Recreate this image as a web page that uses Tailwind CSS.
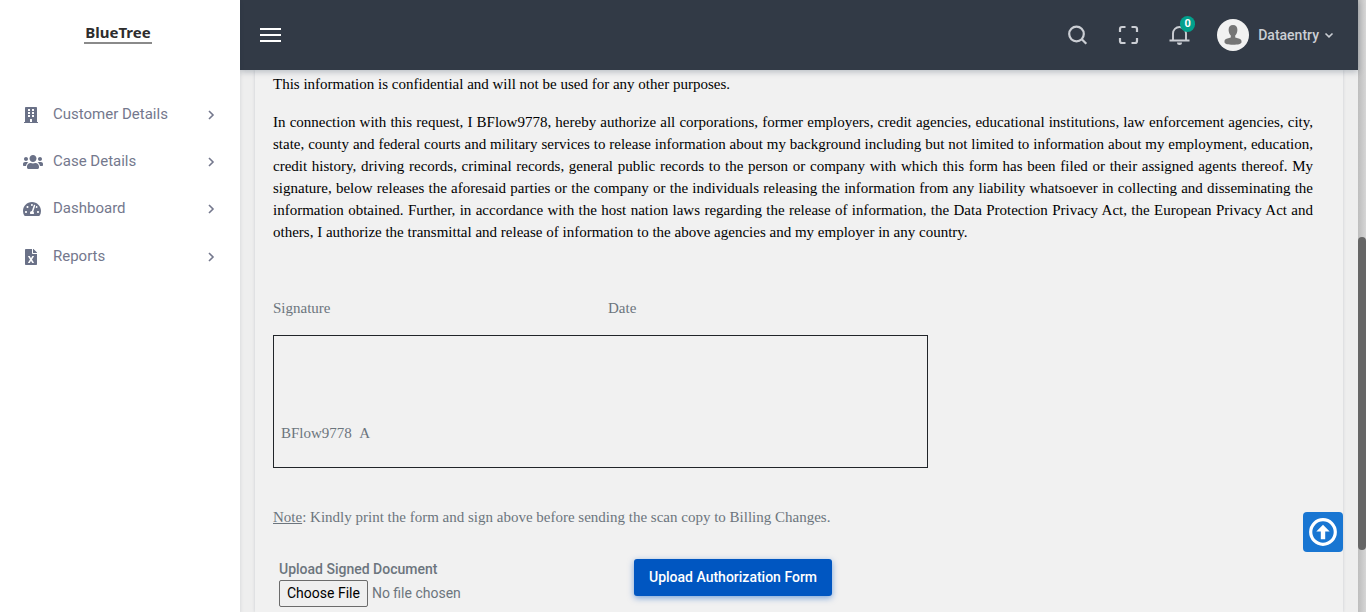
<!DOCTYPE html>
<html lang="en">
<head>
<meta charset="utf-8">
<meta name="viewport" content="width=device-width, initial-scale=1">
<title>BlueTree</title>
<script src="https://cdn.jsdelivr.net/npm/@tailwindcss/browser@4"></script>
</head>
<body class="flex h-screen overflow-hidden bg-[#eeeeee] font-['Roboto',sans-serif] text-sm text-[#74788d]">

<!-- Sidebar -->
<aside class="z-20 flex w-60 shrink-0 flex-col bg-white shadow-[0_2px_4px_rgba(15,34,58,0.12)]">
  <div class="flex h-[70px] items-center justify-center pr-1 pb-1">
    <a href="#" class="border-b-2 border-[#8a8a8a] px-px font-['Noto_Sans','Open_Sans',sans-serif] text-[15px] leading-5 font-bold text-[#2d2d2d]">BlueTree</a>
  </div>
  <nav class="mt-[21px]">
    <ul class="text-[15px] text-[#74788d]">
      <li><a href="#" class="flex h-[47px] items-center pr-6 pl-[21px]">
        <span class="mr-3 flex w-5 justify-center text-[#6a7187]"><svg class="h-4 w-[14px]" viewBox="0 0 448 512" fill="currentColor" fill-rule="evenodd"><path d="M436 480h-20V24c0-13.3-10.7-24-24-24H56C42.700 0 32 10.700 32 24v456H12c-6.600 0-12 5.400-12 12v20h448v-20c0-6.600-5.400-12-12-12zM128 76c0-6.600 5.400-12 12-12h40c6.600 0 12 5.400 12 12v40c0 6.600-5.400 12-12 12h-40c-6.600 0-12-5.400-12-12V76zm0 96c0-6.600 5.400-12 12-12h40c6.600 0 12 5.400 12 12v40c0 6.600-5.400 12-12 12h-40c-6.600 0-12-5.400-12-12v-40zm52 148h-40c-6.600 0-12-5.400-12-12v-40c0-6.600 5.400-12 12-12h40c6.600 0 12 5.400 12 12v40c0 6.600-5.400 12-12 12zm76 160h-64v-84c0-6.600 5.400-12 12-12h40c6.600 0 12 5.400 12 12v84zm64-172c0 6.600-5.400 12-12 12h-40c-6.600 0-12-5.400-12-12v-40c0-6.600 5.400-12 12-12h40c6.600 0 12 5.400 12 12v40zm0-96c0 6.600-5.400 12-12 12h-40c-6.600 0-12-5.400-12-12v-40c0-6.600 5.400-12 12-12h40c6.600 0 12 5.400 12 12v40zm0-96c0 6.600-5.400 12-12 12h-40c-6.600 0-12-5.400-12-12V76c0-6.600 5.400-12 12-12h40c6.600 0 12 5.400 12 12v40z"/></svg></span>
        <span class="flex-1">Customer Details</span>
        <svg class="h-[10px] w-[10px]" viewBox="0 0 10 10" fill="none" stroke="currentColor" stroke-width="1.6"><path d="M3 1l4 4-4 4"/></svg>
      </a></li>
      <li><a href="#" class="flex h-[47px] items-center pr-6 pl-[23px]">
        <span class="mr-[10px] flex w-5 justify-center text-[#6a7187]"><svg class="h-4 w-5" viewBox="0 0 640 512" fill="currentColor"><path d="M96 224c35.300 0 64-28.700 64-64s-28.700-64-64-64-64 28.700-64 64 28.700 64 64 64zm448 0c35.300 0 64-28.700 64-64s-28.700-64-64-64-64 28.700-64 64 28.700 64 64 64zm32 32h-64c-17.600 0-33.500 7.100-45.100 18.600 40.300 22.100 68.900 62 75.100 109.400h66c17.700 0 32-14.300 32-32v-32c0-35.300-28.700-64-64-64zm-256 0c61.900 0 112-50.100 112-112S381.900 32 320 32 208 82.100 208 144s50.100 112 112 112zm76.800 32h-8.300c-20.800 10-43.900 16-68.500 16s-47.600-6-68.500-16h-8.300C179.600 288 128 339.600 128 403.200V432c0 26.500 21.500 48 48 48h288c26.500 0 48-21.500 48-48v-28.800c0-63.600-51.600-115.200-115.200-115.200zm-223.700-13.400C161.500 263.100 145.600 256 128 256H64c-35.300 0-64 28.700-64 64v32c0 17.700 14.300 32 32 32h65.900c6.300-47.400 34.900-87.300 75.200-109.400z"/></svg></span>
        <span class="flex-1">Case Details</span>
        <svg class="h-[10px] w-[10px]" viewBox="0 0 10 10" fill="none" stroke="currentColor" stroke-width="1.6"><path d="M3 1l4 4-4 4"/></svg>
      </a></li>
      <li><a href="#" class="flex h-12 items-center pr-6 pl-[23px]">
        <span class="mr-3 flex w-[18px] justify-center text-[#6a7187]"><svg class="h-4 w-[18px]" viewBox="0 0 576 512" fill="currentColor"><path d="M288 32C128.940 32 0 160.940 0 320c0 52.800 14.250 102.260 39.060 144.800 5.610 9.620 16.300 15.200 27.440 15.200h443c11.140 0 21.830-5.580 27.440-15.200C561.750 422.260 576 372.800 576 320c0-159.060-128.940-288-288-288zm0 64c14.710 0 26.580 10.130 30.320 23.650-1.110 2.260-2.640 4.230-3.450 6.670l-9.220 27.670c-5.130 3.490-10.970 6.010-17.640 6.010-17.670 0-32-14.330-32-32S270.330 96 288 96zM96 384c-17.670 0-32-14.330-32-32s14.330-32 32-32 32 14.330 32 32-14.330 32-32 32zm48-160c-17.670 0-32-14.330-32-32s14.330-32 32-32 32 14.330 32 32-14.330 32-32 32zm246.770-72.410l-61.330 184C343.130 347.330 352 364.540 352 384c0 11.720-3.380 22.550-8.880 32H232.880c-5.500-9.450-8.880-20.280-8.880-32 0-33.940 26.500-61.430 59.900-63.590l61.340-184.010c4.170-12.560 17.730-19.450 30.360-15.170 12.570 4.190 19.350 17.790 15.170 30.360zm14.660 57.200l15.520-46.550c3.470-1.290 7.130-2.230 11.050-2.230 17.670 0 32 14.330 32 32s-14.330 32-32 32c-11.380-.01-20.890-6.280-26.570-15.220zM480 384c-17.670 0-32-14.330-32-32s14.330-32 32-32 32 14.330 32 32-14.330 32-32 32z"/></svg></span>
        <span class="flex-1">Dashboard</span>
        <svg class="h-[10px] w-[10px]" viewBox="0 0 10 10" fill="none" stroke="currentColor" stroke-width="1.6"><path d="M3 1l4 4-4 4"/></svg>
      </a></li>
      <li><a href="#" class="flex h-[47px] items-center pr-6 pl-[21px]">
        <span class="mr-3 flex w-5 justify-center text-[#6a7187]"><svg class="h-4 w-3" viewBox="0 0 384 512" fill="currentColor"><path d="M224 136V0H24C10.700 0 0 10.700 0 24v464c0 13.300 10.700 24 24 24h336c13.300 0 24-10.700 24-24V160H248c-13.200 0-24-10.800-24-24zm60.100 106.500L224 336l60.100 93.500c5.100 8-.6 18.500-10.100 18.500h-34.900c-4.400 0-8.500-2.400-10.600-6.300C208.900 405.500 192 373 192 373c-6.400 14.800-10 20-36.600 68.800-2.100 3.900-6.100 6.300-10.500 6.300H110c-9.500 0-15.200-10.500-10.100-18.500l60.300-93.500-60.300-93.500c-5.200-8 .6-18.500 10.100-18.500h34.800c4.400 0 8.500 2.400 10.600 6.300 26.100 48.800 20 33.600 36.600 68.500 0 0 6.100-11.700 36.600-68.500 2.100-3.900 6.200-6.300 10.600-6.300H274c9.500-.1 15.200 10.400 10.100 18.400zM384 121.900v6.100H256V0h6.100c6.400 0 12.500 2.500 17 7l97.900 98c4.500 4.500 7 10.600 7 16.900z"/></svg></span>
        <span class="flex-1">Reports</span>
        <svg class="h-[10px] w-[10px]" viewBox="0 0 10 10" fill="none" stroke="currentColor" stroke-width="1.6"><path d="M3 1l4 4-4 4"/></svg>
      </a></li>
    </ul>
  </nav>
</aside>

<div class="flex min-w-0 flex-1 flex-col">
  <!-- Top bar -->
  <header class="z-10 flex h-[70px] shrink-0 items-center bg-[#323a46] pr-6 pl-[19px] text-[#cbced4] shadow-[0_2px_6px_rgba(15,34,58,0.25)]">
    <button type="button" aria-label="Toggle menu" class="text-white"><svg class="h-[22px] w-[22px]" viewBox="0 0 22 22" stroke="currentColor" stroke-width="2"><path d="M1 5h21M1 11h21M1 17h21"/></svg></button>
    <div class="ml-auto flex items-center">
      <button type="button" aria-label="Search" class="mr-[29px]"><svg class="h-[22px] w-[22px]" viewBox="0 0 22 22" fill="none" stroke="currentColor" stroke-width="2.200"><circle cx="9.500" cy="10" r="7.300"/><path d="M14.800 15.300l4.500 4.500"/></svg></button>
      <button type="button" aria-label="Full screen" class="mr-[29px]"><svg class="h-[22px] w-[22px]" viewBox="0 0 22 22" fill="none" stroke="currentColor" stroke-width="2.200"><path d="M2 8V5Q2 3 4 3H7.500M13.500 3h3.500q2 0 2 2v3M19 14v3q0 2-2 2H13.500M7.500 19H4q-2 0-2-2v-3"/></svg></button>
      <button type="button" aria-label="Notifications" class="relative mr-[26px]"><svg class="h-[22px] w-[22px]" viewBox="0 0 22 22" fill="none" stroke="currentColor" stroke-width="1.900"><path d="M.5 16.500h20M4 16V9.500a6.500 6.500 0 0 1 13 0V16"/><path d="M8 18.500h5a2.500 2.500 0 0 1-5 0z" fill="currentColor" stroke="none"/></svg>
        <span class="absolute -top-2 left-[11px] flex h-4 w-[15px] items-center justify-center rounded-full bg-[#02a08c] text-[11px] leading-4 font-bold text-white">0</span>
      </button>
      <button type="button" class="flex items-center text-sm font-medium">
        <svg class="mr-[9px] h-8 w-8" viewBox="0 0 32 32"><circle cx="16" cy="16" r="16" fill="#f1f1f1"/><path d="M16 6c2.800 0 4.400 1.900 4.400 4.800 0 2.500-1 4.700-2.200 5.700v2l4.300 1.300c1.300.4 2 1.400 2 2.700v.8c0 1.700-3.500 2.500-8.500 2.500s-8.500-.8-8.500-2.500v-.8c0-1.300.7-2.300 2-2.700l4.300-1.300v-2c-1.200-1-2.200-3.200-2.200-5.700C11.600 7.900 13.200 6 16 6z" fill="#757575"/></svg>
        <span>Dataentry</span>
        <svg class="ml-[5px] h-[10px] w-[10px]" viewBox="0 0 10 10" fill="none" stroke="currentColor" stroke-width="1.6"><path d="M1.500 3.500L5 6.800l3.500-3.300"/></svg>
      </button>
    </div>
  </header>

  <!-- Authorization form -->
  <main class="min-h-0 flex-1 overflow-hidden pr-[15px] pl-[15px]">
    <form class="h-full bg-[#f1f1f1] pt-[3px] pr-[30px] pl-[18px] text-[#6c757d] shadow-[0_0_3px_rgba(15,34,58,0.15)]">
      <div class="font-['Liberation_Serif',serif] text-[15px] leading-[22px]">
        <p class="mb-4 text-black">This information is confidential and will not be used for any other purposes.</p>
        <p class="text-justify text-black">In connection with this request, I BFlow9778, hereby authorize all corporations, former employers, credit agencies, educational institutions, law enforcement agencies, city, state, county and federal courts and military services to release information about my background including but not limited to information about my employment, education, credit history, driving records, criminal records, general public records to the person or company with which this form has been filed or their assigned agents thereof. My signature, below releases the aforesaid parties or the company or the individuals releasing the information from any liability whatsoever in collecting and disseminating the information obtained. Further, in accordance with the host nation laws regarding the release of information, the Data Protection Privacy Act, the European Privacy Act and others, I authorize the transmittal and release of information to the above agencies and my employer in any country.</p>
        <div class="mt-[54px] flex">
          <p class="w-[335px]">Signature</p>
          <p>Date</p>
        </div>
        <div class="mt-4 flex h-[133px] w-[655px] max-w-full items-end border border-[#212529] px-[7px] pb-[23px]">
          <p>BFlow9778 &nbsp;A</p>
        </div>
        <p class="mt-[38px]"><u>Note</u>: Kindly print the form and sign above before sending the scan copy to Billing Changes.</p>
      </div>
      <div class="mt-[31px] flex items-start pl-[6px]">
        <div class="w-[355px]">
          <label for="signed-document" class="block h-[21px] leading-[21px] font-medium">Upload Signed Document</label>
          <input id="signed-document" type="file" class="block w-full text-sm file:mr-1 file:h-[27px] file:rounded-[2px] file:border file:border-solid file:border-[#6b6b6b] file:bg-[#efefef] file:px-[7px] file:pb-[2px] file:text-sm file:font-normal file:text-black">
        </div>
        <button type="button" class="h-[37px] rounded-[3px] bg-[#0056c1] px-[15px] pb-[2px] text-sm font-medium text-white shadow-[0_2px_6px_rgba(0,86,193,0.5)]">Upload Authorization Form</button>
      </div>
    </form>
  </main>
</div>

<!-- Page scroll track -->
<div class="flex w-2 shrink-0 flex-col bg-linear-to-r from-[#bdbdbd] to-[#d6d6d6]">
  <div class="mt-[237px] h-[313px] rounded-full bg-[#666666]"></div>
</div>

<!-- Back to top -->
<a href="#" aria-label="Back to top" class="fixed right-[23px] bottom-[60px] z-30 flex h-10 w-10 items-center justify-center rounded-[4px] bg-[#1976d2] text-white">
  <svg class="h-7 w-7" viewBox="0 0 28 28" fill="none"><circle cx="14" cy="14" r="12.300" stroke="currentColor" stroke-width="3.200"/><path d="M14 6.800l6.700 6.700h-4.500V21.200h-4.400v-7.700H7.300z" fill="currentColor"/></svg>
</a>
</body>
</html>
